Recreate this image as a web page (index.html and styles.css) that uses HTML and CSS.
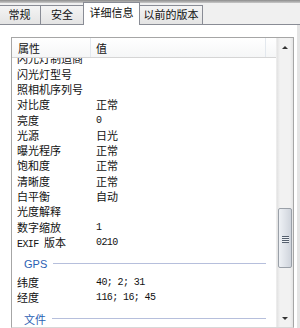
FILE: index.html
```html
<!DOCTYPE html>
<html lang="zh-CN">
<head>
<meta charset="utf-8">
<link rel="stylesheet" href="styles.css">
</head>
<body>
<div class="window">
  <div class="topband"></div>
  <div class="tabs">
    <div class="tab t1">常规</div>
    <div class="tab t2">安全</div>
    <div class="tab sel">详细信息</div>
    <div class="tab t4">以前的版本</div>
  </div>
  <div class="panel">
    <div class="list">
      <div class="content">
        <div class="header">
          <div class="hcol c1">属性</div>
          <div class="hcol c2">值</div>
          <div class="hcol c3"></div>
        </div>
        <div class="body">
          <div class="inner">
            <div class="row"><span>闪光灯制造商</span><span></span></div>
            <div class="row"><span>闪光灯型号</span><span></span></div>
            <div class="row"><span>照相机序列号</span><span></span></div>
            <div class="row"><span>对比度</span><span>正常</span></div>
            <div class="row"><span>亮度</span><span class="num">0</span></div>
            <div class="row"><span>光源</span><span>日光</span></div>
            <div class="row"><span>曝光程序</span><span>正常</span></div>
            <div class="row"><span>饱和度</span><span>正常</span></div>
            <div class="row"><span>清晰度</span><span>正常</span></div>
            <div class="row"><span>白平衡</span><span>自动</span></div>
            <div class="row"><span>光度解释</span><span></span></div>
            <div class="row"><span>数字缩放</span><span class="num">1</span></div>
            <div class="row"><span><span class="num">EXIF </span>版本</span><span class="num">0210</span></div>
            <div class="group"><span class="gname">GPS</span><span class="gline"></span></div>
            <div class="row"><span>纬度</span><span class="num">40; 2; 31</span></div>
            <div class="row"><span>经度</span><span class="num">116; 16; 45</span></div>
            <div class="group"><span class="gname cjk">文件</span><span class="gline"></span></div>
          </div>
        </div>
      </div>
      <div class="scrollbar">
        <div class="arrow up"></div>
        <div class="track">
          <div class="thumb"><div class="grip"></div></div>
        </div>
        <div class="arrow down"></div>
      </div>
    </div>
  </div>
</div>
</body>
</html>
```
FILE: styles.css
```css
html, body {
  margin: 0;
  padding: 0;
  width: 300px;
  height: 328px;
  overflow: hidden;
  background: #fdfdf6;
}
.window {
  width: 300px;
  height: 328px;
  display: flex;
  flex-direction: column;
  font-family: "Noto Sans CJK SC", "Noto Sans", sans-serif;
  font-size: 11px;
  color: #111;
}
.topband {
  height: 3px;
  background: linear-gradient(#8c8c8c, #c9c9c9);
}
.tabs {
  height: 22px;
  display: flex;
  align-items: flex-end;
  background: #f0f0f0;
  border-bottom: 1px solid #898c95;
  box-sizing: border-box;
}
.tab {
  box-sizing: border-box;
  height: 19px;
  border: 1px solid #898c95;
  border-bottom: none;
  background: linear-gradient(#f4f4f4, #e4e4e4);
  display: flex;
  align-items: center;
  justify-content: center;
  line-height: 1;
  padding-bottom: 1px;
  margin-left: -1px;
}
.t1 { width: 45px; margin-left: -4px; padding-left: 2px; }
.t2 { width: 44px; }
.sel {
  width: 57px;
  height: 23px;
  margin-bottom: -1px;
  background: #fff;
  z-index: 1;
  padding-bottom: 4px;
}
.t4 { width: 64px; }
.panel {
  flex: 1;
  background: #fff;
  padding: 12px 3px 0 11px;
  display: flex;
  border-right: 3px solid #e4e4e4;
  box-sizing: border-box;
  width: 300px;
}
.list {
  flex: 1;
  height: 289px;
  border: 1px solid #a6a6a6;
  border-bottom-color: #d8d8d8;
  display: flex;
}
.content {
  flex: 1;
  display: flex;
  flex-direction: column;
  min-width: 0;
}
.header {
  height: 19px;
  display: flex;
  background: linear-gradient(#ffffff, #f5f6f7);
  border-bottom: 1px solid #d5d5d5;
}
.hcol {
  display: flex;
  align-items: center;
  padding-left: 5px;
  box-sizing: border-box;
  border-right: 1px solid #e3e8ee;
}
.c1 { width: 79px; padding-left: 6px; }
.c2 { width: 175px; }
.c3 { flex: 1; border-right: none; }
.body {
  flex: 1;
  overflow: hidden;
}
.inner {
  margin-top: -6.6px;
}
.row {
  height: 15.3px;
  line-height: 15.3px;
  display: grid;
  grid-template-columns: 79px 1fr;
  white-space: nowrap;
}
.row > span:first-child { padding-left: 5px; }
.row > span:last-child { padding-left: 5px; }
.num {
  font-family: "Liberation Mono", monospace;
  font-size: 10px;
  letter-spacing: -0.6px;
}
.group {
  height: 24.7px;
  box-sizing: border-box;
  padding: 2px 10px 0 12px;
  display: flex;
  align-items: center;
  gap: 6px;
}
.gname {
  font-family: "Liberation Sans", "Noto Sans CJK SC", sans-serif;
  font-size: 11px;
  color: #2b5fb4;
}
.gname.cjk { font-family: "Noto Sans CJK SC", sans-serif; }
.gline {
  flex: 1;
  height: 1px;
  background: #b6bfdc;
}
.scrollbar {
  width: 16px;
  display: flex;
  flex-direction: column;
  background: linear-gradient(90deg, #e2e2e2, #f2f2f2 3px, #f2f2f2 13px, #e4e4e4);
  border-left: 1px solid #ececec;
}
.arrow {
  height: 17px;
  display: flex;
  align-items: center;
  justify-content: center;
}
.arrow::before {
  content: "";
  width: 0;
  height: 0;
  border-left: 3px solid transparent;
  border-right: 3px solid transparent;
}
.up::before { border-bottom: 3px solid #333; margin-top: 1px; }
.down::before { border-top: 3px solid #333; }
.track {
  flex: 1;
  display: flex;
  flex-direction: column;
  padding-top: 153px;
}
.thumb {
  height: 60px;
  margin: 0 1px;
  box-sizing: border-box;
  border: 1px solid #9aa0a8;
  border-radius: 2px;
  background: linear-gradient(90deg, #eef1f5, #dfe3e9 50%, #cfd4dc);
  display: flex;
  align-items: center;
  justify-content: center;
}
.grip {
  width: 7px;
  height: 7px;
  background: repeating-linear-gradient(#55606e 0 1px, #eef1f5 1px 2px);
  margin-top: 3px;
}
```
